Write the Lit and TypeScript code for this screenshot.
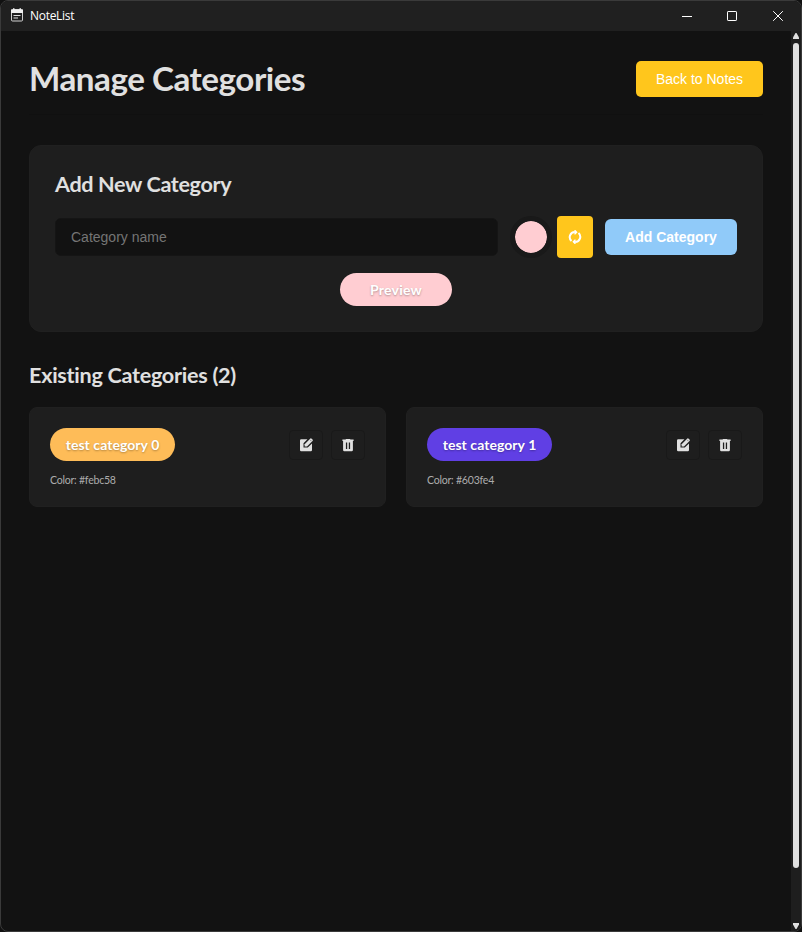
import { LitElement, html, css, svg } from "lit";
import { customElement, property } from "lit/decorators.js";

const editIcon = svg`<svg width="14" height="14" viewBox="0 0 14 14">
  <path fill="#e0e0e0" d="M2.2 1.2H8.4L4.5 5.2V9.6H8.8L13 5.6V11.9Q13 13.2 11.8 13.2H2.2Q1 13.2 1 12V2.4Q1 1.2 2.2 1.2Z"/>
  <path fill="#e0e0e0" d="M5.6 8.5V6.2L11.1.7Q11.9 0 12.7.7L13.5 1.5Q14.2 2.3 13.5 3.1L8 8.5Z"/>
  <path stroke="#858585" stroke-width="1" d="M11.1 1.8l1.3 1.3"/>
</svg>`;

const trashIcon = svg`<svg width="14" height="14" viewBox="0 0 14 14">
  <path fill="#e0e0e0" fill-rule="evenodd" d="M1.4 1.5H4.4L5.2.9H8.8L9.6 1.5H12.6V3H11.9V12.1Q11.9 13.3 10.7 13.3H3.3Q2.1 13.3 2.1 12.1V3H1.4ZM4.9 4.6V11H6.2V4.6ZM7.8 4.6V11H9.1V4.6Z"/>
</svg>`;

@customElement("category-card")
class CategoryCard extends LitElement {
  @property() name = "";
  @property() color = "";

  static styles = css`
    :host {
      display: block;
      box-sizing: border-box;
      height: 100px;
      padding: 20px;
      border: 1px solid #202020;
      border-radius: 8px;
      background: #1e1e1e;
    }
    .row { display: flex; align-items: center; height: 33px; gap: 8px; }
    .tag {
      box-sizing: border-box;
      width: 125px;
      height: 33px;
      border-radius: 17px;
      margin-right: auto;
      text-align: center;
      line-height: 34px;
      font-size: 14px;
      font-weight: 700;
      letter-spacing: 0.05px;
      color: #fff;
      white-space: nowrap;
      text-shadow: 0 1px 2px rgba(0, 0, 0, 0.3);
    }
    .action {
      box-sizing: border-box;
      display: flex;
      align-items: center;
      justify-content: center;
      width: 34px;
      height: 30px;
      padding: 0;
      border: 1px solid #191919;
      border-radius: 4px;
      background: none;
    }
    .code { margin-top: 11px; font-size: 10.6px; line-height: 16px; letter-spacing: -0.25px; color: #acacac; }
  `;

  render() {
    return html`
      <div class="row">
        <span class="tag" style="background:${this.color}">${this.name}</span>
        <button class="action" aria-label="Edit">${editIcon}</button>
        <button class="action" aria-label="Delete">${trashIcon}</button>
      </div>
      <div class="code">Color: ${this.color}</div>
    `;
  }
}

@customElement("app-root")
class AppRoot extends LitElement {
  categories = [
    { name: "test category 0", color: "#febc58" },
    { name: "test category 1", color: "#603fe4" },
  ];

  static styles = css`
    :host { display: block; height: 932px; background: #111; font-family: Lato, sans-serif; color: #e0e0e0; }
    * { box-sizing: border-box; }
    .window {
      display: flex;
      flex-direction: column;
      height: 932px;
      border: 1px solid #3a3a3a;
      border-radius: 8px;
      overflow: hidden;
      background: #121212;
    }
    .titlebar { display: flex; align-items: center; height: 30px; flex: none; background: #202020; padding-left: 9px; }
    .titlebar > svg { margin-top: -2px; }
    .app-name { margin: -1px 0 0 6px; font: 12px "Open Sans", sans-serif; letter-spacing: -0.3px; color: #fff; flex: 1; }
    .controls { display: flex; }
    .control { width: 45.5px; height: 28px; display: flex; align-items: center; justify-content: center; }
    .control:nth-child(2) { width: 45px; padding-right: 1px; }
    .control:last-child { width: 46px; }
    .body { display: flex; flex: 1; min-height: 0; }
    .content { flex: 1; padding: 0 28px; }
    .header { display: flex; align-items: center; justify-content: space-between; height: 84px; padding-top: 12px; border-bottom: 1px solid #101010; }
    h1 { margin: -1px 0 0; font-size: 33.2px; font-weight: 700; line-height: 42px; letter-spacing: -0.48px; white-space: nowrap; }
    h2 { margin: 0; font-size: 21.6px; font-weight: 700; line-height: 27px; letter-spacing: -0.36px; white-space: nowrap; }
    button { border: 0; padding: 0; font-family: "Liberation Sans", Arial, sans-serif; color: #fff; }
    .back { width: 127px; height: 36px; border-radius: 5px; background: #ffc61c; font-size: 14px; }
    .panel { margin-top: 30px; height: 187px; padding: 25px; border: 1px solid #202020; border-radius: 12px; background: #1e1e1e; }
    .form { display: flex; align-items: center; height: 42px; margin-top: 18px; }
    .field { width: 443px; height: 38px; padding: 0 15px; border: 1px solid #151515; border-radius: 6px; background: #121212; font: 14px "Liberation Sans", Arial, sans-serif; }
    .field::placeholder { color: #757575; }
    .swatch { width: 42px; height: 42px; margin-left: 12px; border: 5px solid #191919; border-radius: 50%; background: #ffcdd2; background-clip: padding-box; }
    .shuffle { display: flex; align-items: center; justify-content: center; width: 36px; height: 42px; margin-left: 5px; border-radius: 4px; background: #ffc61c; }
    .add { width: 132px; height: 36px; margin-left: 12px; border-radius: 6px; background: #90caf9; font-size: 14px; font-weight: 700; }
    .preview { width: 112px; height: 33px; margin: 15px auto 0; border-radius: 17px; background: #ffcdd2; color: #fff; text-align: center; font-size: 14px; font-weight: 700; line-height: 34px; letter-spacing: 0.2px; text-shadow: 0 1px 2px rgba(0, 0, 0, 0.3); }
    .existing { margin-top: 30px; letter-spacing: -0.28px; }
    .grid { display: grid; grid-template-columns: 1fr 1fr; gap: 20px; margin-top: 18px; }
    .scrollbar { width: 10px; display: flex; flex-direction: column; align-items: center; background: #1e1e1e; padding: 2px 0; }
    .thumb { width: 6px; height: 825px; margin-top: 4px; border-radius: 3px; background: #e0e0e0; }
    .down { margin-top: auto; }
    svg { display: block; flex: none; }
  `;

  render() {
    return html`
      <div class="window">
        <div class="titlebar">
          <svg width="14" height="14" viewBox="0 0 14 14">
            <rect x="1.5" y="1.5" width="11" height="11.5" rx="1" fill="none" stroke="#d0d0d0"/>
            <path d="M1 1.5H13V5H1ZM3 .3H4.5V2H3ZM9.5 .3H11V2H9.5Z" fill="#f0f0f0"/>
            <path d="M3.5 7.5H10.5M3.5 10H8" stroke="#e0e0e0"/>
          </svg>
          <span class="app-name">NoteList</span>
          <div class="controls">
            <div class="control"><svg width="10" height="10"><path d="M0 5.5H10" stroke="#fff"/></svg></div>
            <div class="control"><svg width="10" height="10"><rect x=".5" y=".5" width="9" height="9" rx=".6" fill="none" stroke="#fff"/></svg></div>
            <div class="control"><svg width="10" height="10"><path d="M.2.2L9.8 9.8M9.8.2L.2 9.8" stroke="#fff"/></svg></div>
          </div>
        </div>
        <div class="body">
          <main class="content">
            <header class="header">
              <h1>Manage Categories</h1>
              <button class="back">Back to Notes</button>
            </header>
            <section class="panel">
              <h2>Add New Category</h2>
              <div class="form">
                <input class="field" placeholder="Category name" />
                <span class="swatch"></span>
                <button class="shuffle" aria-label="Random color">
                  <svg width="14" height="14" viewBox="0 0 14 14">
                    <path d="M3.5 10.9A5 5 0 0 1 6.8 2.1M10.5 3.1A5 5 0 0 1 7.2 11.9" fill="none" stroke="#fff" stroke-width="2"/>
                    <path d="M6.4 0H7.4L9.6 2.2L7.4 4.6H6.4ZM7.6 14H6.6L4.4 11.8L6.6 9.4H7.6Z" fill="#fff"/>
                  </svg>
                </button>
                <button class="add">Add Category</button>
              </div>
              <div class="preview">Preview</div>
            </section>
            <h2 class="existing">Existing Categories (${this.categories.length})</h2>
            <div class="grid">
              ${this.categories.map((c) => html`<category-card .name=${c.name} .color=${c.color}></category-card>`)}
            </div>
          </main>
          <div class="scrollbar">
            <svg width="6" height="6"><path d="M2.5 0H3.5L6 4.5V6H0V4.5Z" fill="#e0e0e0"/></svg>
            <div class="thumb"></div>
            <svg class="down" width="6" height="6"><path d="M0 0H6V1.5L3.5 6H2.5L0 1.5Z" fill="#e0e0e0"/></svg>
          </div>
        </div>
      </div>
    `;
  }
}
